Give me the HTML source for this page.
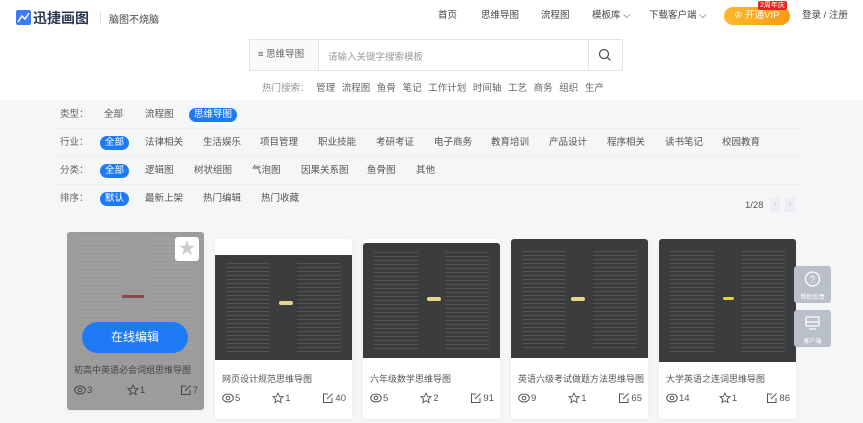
<!DOCTYPE html>
<html><head><meta charset="utf-8"><style>
*{margin:0;padding:0;box-sizing:border-box}
body{width:863px;height:423px;overflow:hidden;background:#f5f6f8;font-family:"Liberation Sans","Noto Sans CJK SC",sans-serif;position:relative;color:#333}
.a{position:absolute;white-space:nowrap}
.top{position:absolute;left:0;top:0;width:863px;height:100px;background:#fff}
.f{font-size:9.5px;color:#555;line-height:12px}
.lab{color:#666}
.chip{position:absolute;background:#1f7bf5;color:#fff;border-radius:8px;height:14px;line-height:14px;padding:0 5px;font-size:9.5px}
.line{position:absolute;left:55px;width:750px;height:1px;background:#eceef1}
.card{position:absolute;width:137px;height:180px;background:#fff;border-radius:3px;box-shadow:0 1px 4px rgba(0,0,0,.05)}
.img{position:absolute;left:0;width:137px;background:#3a3c3e;overflow:hidden}
.img:before,.img:after{content:"";position:absolute;top:8%;height:84%;width:32%;background:repeating-linear-gradient(0deg,rgba(200,200,200,.16) 0 1px,transparent 1px 4px)}
.img:before{left:8%}.img:after{right:8%}
.tt{position:absolute;left:7px;font-size:9px;color:#555;white-space:nowrap}
.st{position:absolute;left:7px;right:6px;font-size:9.5px;color:#555;display:flex;justify-content:space-between;align-items:center}
.st svg{vertical-align:-3px;margin-right:1px}
.fl{position:absolute;left:794px;width:37px;height:37px;background:#b9c0ca;border-radius:3px;color:#fff;font-size:6px;text-align:center}
</style></head><body>
<div class="top"></div>
<svg class="a" style="left:16px;top:10px" width="15" height="15"><rect width="15" height="15" rx="2" fill="#3b7cf6"/><path d="M2 12 L6 6 L9 9 L13 3" stroke="#fff" stroke-width="1.5" fill="none"/></svg>
<div class="a" style="left:33px;top:8px;font-size:14px;font-weight:bold;color:#2a3a55">迅捷画图</div>
<div class="a" style="left:100px;top:12px;width:1px;height:11px;background:#ddd"></div>
<div class="a" style="left:109px;top:11px;font-size:10px;color:#444">脑图不烧脑</div>
<div class="a f" style="left:438px;top:10px;color:#444">首页</div>
<div class="a f" style="left:481px;top:10px;color:#444">思维导图</div>
<div class="a f" style="left:541px;top:10px;color:#444">流程图</div>
<div class="a f" style="left:592px;top:10px;color:#444">模板库 ⌵</div>
<div class="a f" style="left:649px;top:10px;color:#444">下载客户端 ⌵</div>
<div class="a" style="left:724px;top:7px;width:66px;height:18px;border-radius:9px;background:linear-gradient(90deg,#fdb92a,#f79a14);color:#fff;font-size:9.5px;line-height:18px;padding-left:10px">♔ 开通VIP</div>
<div class="a" style="left:758px;top:1px;background:#e8231c;color:#fff;font-size:7px;padding:0 2px;line-height:9px;border-radius:2px">2周年庆</div>
<div class="a f" style="left:802px;top:10px;color:#444">登录 / 注册</div>
<div class="a" style="left:249px;top:39px;width:374px;height:32px;border:1px solid #e3e5e8;border-radius:2px;background:#fff"></div>
<div class="a" style="left:249px;top:39px;width:70px;height:32px;background:#fafafa;border:1px solid #e3e5e8;font-size:9.5px;color:#666;line-height:30px;padding-left:8px">≡ 思维导图</div>
<div class="a" style="left:328px;top:49px;font-size:9.5px;color:#999">请输入关键字搜索模板</div>
<div class="a" style="left:588px;top:39px;width:1px;height:32px;background:#e3e5e8"></div>
<svg class="a" style="left:598px;top:48px" width="14" height="14"><circle cx="6" cy="6" r="4.5" stroke="#555" stroke-width="1.3" fill="none"/><path d="M9.5 9.5 L12.5 12.5" stroke="#555" stroke-width="1.3"/></svg>
<div class="a" style="left:262px;top:80px;font-size:9.5px;color:#999">热门搜索：<span style="color:#666;word-spacing:4px"> 管理 流程图 鱼骨 笔记 工作计划 时间轴 工艺 商务 组织 生产</span></div>

<div class="a f lab" style="left:60px;top:109px">类型：</div>
<div class="a f" style="left:104px;top:109px">全部</div>
<div class="a f" style="left:145px;top:109px">流程图</div>
<div class="chip" style="left:189px;top:108px">思维导图</div>
<div class="line" style="top:128px"></div>
<div class="a f lab" style="left:60px;top:137px">行业：</div>
<div class="chip" style="left:100px;top:136px">全部</div>
<div class="a f" style="left:145px;top:137px">法律相关</div>
<div class="a f" style="left:203px;top:137px">生活娱乐</div>
<div class="a f" style="left:260px;top:137px">项目管理</div>
<div class="a f" style="left:318px;top:137px">职业技能</div>
<div class="a f" style="left:376px;top:137px">考研考证</div>
<div class="a f" style="left:434px;top:137px">电子商务</div>
<div class="a f" style="left:491px;top:137px">教育培训</div>
<div class="a f" style="left:549px;top:137px">产品设计</div>
<div class="a f" style="left:607px;top:137px">程序相关</div>
<div class="a f" style="left:665px;top:137px">读书笔记</div>
<div class="a f" style="left:722px;top:137px">校园教育</div>
<div class="line" style="top:156px"></div>
<div class="a f lab" style="left:60px;top:165px">分类：</div>
<div class="chip" style="left:100px;top:164px">全部</div>
<div class="a f" style="left:145px;top:165px">逻辑图</div>
<div class="a f" style="left:194px;top:165px">树状组图</div>
<div class="a f" style="left:252px;top:165px">气泡图</div>
<div class="a f" style="left:301px;top:165px">因果关系图</div>
<div class="a f" style="left:367px;top:165px">鱼骨图</div>
<div class="a f" style="left:416px;top:165px">其他</div>
<div class="line" style="top:184px"></div>
<div class="a f lab" style="left:60px;top:193px">排序：</div>
<div class="chip" style="left:100px;top:192px">默认</div>
<div class="a f" style="left:145px;top:193px">最新上架</div>
<div class="a f" style="left:203px;top:193px">热门编辑</div>
<div class="a f" style="left:261px;top:193px">热门收藏</div>
<div class="a f" style="left:745px;top:200px">1/28</div>
<div class="a" style="left:770px;top:198px;width:10px;height:14px;background:#eceef1;color:#ccc;font-size:9px;text-align:center">‹</div>
<div class="a" style="left:785px;top:198px;width:10px;height:14px;background:#eceef1;color:#ccc;font-size:9px;text-align:center">›</div>

<svg width="0" height="0" style="position:absolute"><defs>
<g id="eye"><ellipse cx="6" cy="6" rx="5.3" ry="4" fill="none" stroke="currentColor"/><circle cx="6" cy="6" r="1.8" fill="none" stroke="currentColor"/></g>
<g id="star"><path d="M6 1 L7.5 4.3 L11 4.6 L8.3 7 L9.1 10.6 L6 8.7 L2.9 10.6 L3.7 7 L1 4.6 L4.5 4.3 Z" fill="none" stroke="currentColor" stroke-width=".9"/></g>
<g id="ed"><path d="M6 2 H1.5 V10.5 H10 V6" fill="none" stroke="currentColor"/><path d="M5 7 L10.5 1.5" stroke="currentColor"/></g>
</defs></svg>

<div class="card" style="left:67px;top:232px;height:178px;background:#9c9c9c">
<div class="a" style="left:10px;top:4px;width:45px;height:112px;background:repeating-linear-gradient(0deg,#a2a2a2 0 1px,transparent 1px 4px)"></div>
<div class="a" style="left:82px;top:4px;width:45px;height:112px;background:repeating-linear-gradient(0deg,#a2a2a2 0 1px,transparent 1px 4px)"></div>
<div class="a" style="left:55px;top:63px;width:22px;height:3px;background:#8a4a4a"></div>
<div class="a" style="left:108px;top:5px;width:24px;height:24px;background:#fff;border-radius:3px;color:#ccc;font-size:17px;text-align:center;line-height:24px">★</div>
<div class="a" style="left:15px;top:90px;width:106px;height:31px;background:#1f7bf5;border-radius:16px;color:#fff;font-size:12px;text-align:center;line-height:31px">在线编辑</div>
<div class="tt" style="top:131px;color:#444">初高中英语必会词组思维导图</div>
<div class="st" style="top:152px;color:#444"><span><svg width="12" height="12"><use href="#eye"/></svg>3</span><span><svg width="12" height="12"><use href="#star"/></svg>1</span><span><svg width="12" height="12"><use href="#ed"/></svg>7</span></div>
</div>
<div class="card" style="left:215px;top:239px"><div class="img" style="top:16px;height:105px"></div><div class="a" style="left:64px;top:62px;width:14px;height:4px;background:#e8d58a;border-radius:2px"></div>
<div class="tt" style="top:133px">网页设计规范思维导图</div><div class="st" style="top:153px"><span><svg width="12" height="12"><use href="#eye"/></svg>5</span><span><svg width="12" height="12"><use href="#star"/></svg>1</span><span><svg width="12" height="12"><use href="#ed"/></svg>40</span></div></div>
<div class="card" style="left:363px;top:239px"><div class="img" style="top:4px;height:115px;border-radius:3px 3px 0 0"></div><div class="a" style="left:64px;top:58px;width:14px;height:4px;background:#e8d58a;border-radius:2px"></div>
<div class="tt" style="top:133px">六年级数学思维导图</div><div class="st" style="top:153px"><span><svg width="12" height="12"><use href="#eye"/></svg>5</span><span><svg width="12" height="12"><use href="#star"/></svg>2</span><span><svg width="12" height="12"><use href="#ed"/></svg>91</span></div></div>
<div class="card" style="left:511px;top:239px"><div class="img" style="top:0;height:119px;border-radius:3px 3px 0 0"></div><div class="a" style="left:60px;top:58px;width:14px;height:4px;background:#e8d58a;border-radius:2px"></div>
<div class="tt" style="top:133px">英语六级考试做题方法思维导图</div><div class="st" style="top:153px"><span><svg width="12" height="12"><use href="#eye"/></svg>9</span><span><svg width="12" height="12"><use href="#star"/></svg>1</span><span><svg width="12" height="12"><use href="#ed"/></svg>65</span></div></div>
<div class="card" style="left:659px;top:239px"><div class="img" style="top:0;height:123px;border-radius:3px 3px 0 0"></div><div class="a" style="left:64px;top:58px;width:11px;height:3px;background:#e8d030;border-radius:2px"></div>
<div class="tt" style="top:133px">大学英语之连词思维导图</div><div class="st" style="top:153px"><span><svg width="12" height="12"><use href="#eye"/></svg>14</span><span><svg width="12" height="12"><use href="#star"/></svg>1</span><span><svg width="12" height="12"><use href="#ed"/></svg>86</span></div></div>

<div class="fl" style="top:266px"><svg width="37" height="24"><circle cx="18.5" cy="13" r="7" fill="none" stroke="#fff" stroke-width="1.3"/><text x="18.5" y="16.5" font-size="9" fill="#fff" text-anchor="middle" font-family="Liberation Sans">?</text></svg>帮助反馈</div>
<div class="fl" style="top:310px"><svg width="37" height="24"><rect x="12" y="7" width="13" height="9" rx="1" fill="none" stroke="#fff" stroke-width="1.3"/><path d="M12 12 H25 M15 19 H22" stroke="#fff" stroke-width="1.3"/></svg>客户端</div>
</body></html>
